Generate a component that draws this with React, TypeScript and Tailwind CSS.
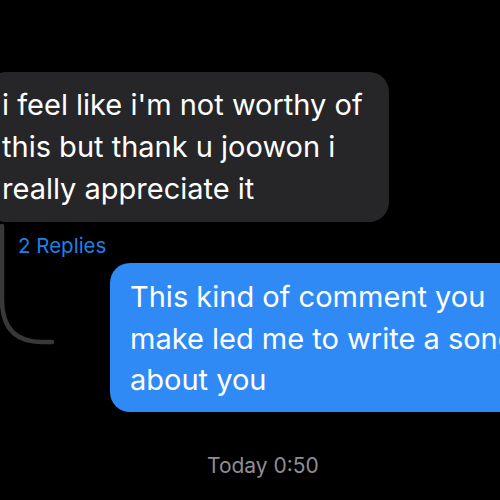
export default function App() {
  const font = { fontFamily: 'Inter, "Noto Sans", "Liberation Sans", sans-serif' };
  return (
    <div className="w-[500px] h-[500px] bg-black overflow-hidden flex flex-col" style={font}>
      <div className="pt-[72px]">
        <div className="-ml-[14px] w-[403px] h-[150px] rounded-[20px] bg-[#262628] pl-[16px] pt-[12px] text-white text-[29px] leading-[42px] whitespace-nowrap">
          <div>i feel like i'm not worthy of</div>
          <div>this but thank u joowon i</div>
          <div>really appreciate it</div>
        </div>
      </div>
      <div className="relative">
        <svg className="absolute left-0 top-0" width="60" height="130" viewBox="0 0 60 130">
          <path d="M2 4 V78 Q2 120 42 120 H52" fill="none" stroke="#38383a" strokeWidth="4.5" strokeLinecap="round" />
        </svg>
        <div className="pl-[18px] pt-[12px] h-[41px] text-[20.5px] leading-[24px] text-[#1f7fe9]">2 Replies</div>
        <div className="ml-[110px] w-[420px] h-[149px] rounded-[20px] bg-[#2f8af6] pl-[20px] pt-[13px] text-white text-[29px] leading-[41.5px] whitespace-nowrap">
          <div>This kind of comment you</div>
          <div>make led me to write a song</div>
          <div>about you</div>
        </div>
      </div>
      <div className="pt-[42px] pl-[207px] text-[21px] leading-[24px] text-[#8e8e93]">Today 0:50</div>
    </div>
  );
}
